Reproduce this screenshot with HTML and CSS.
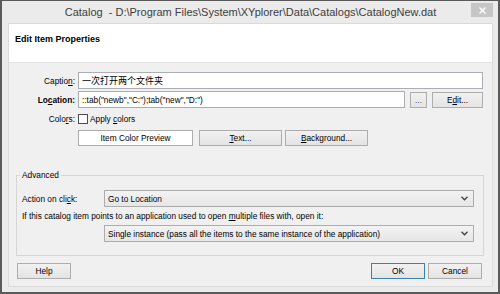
FILE: index.html
```html
<!DOCTYPE html>
<html>
<head>
  <title>Catalog - Edit Item Properties</title>
  <link rel="stylesheet" href="styles.css">
</head>
<body>
  <div class="window">
    <div class="titlebar">
      <span></span>
      <div class="title">Catalog  - D:\Program Files\System\XYplorer\Data\Catalogs\CatalogNew.dat</div>
      <div class="close">
        <svg width="7" height="7" viewBox="0 0 7 7"><path d="M0.5 0.5L6.5 6.5M6.5 0.5L0.5 6.5" stroke="#fff" stroke-width="1.4"/></svg>
      </div>
    </div>

    <div class="client">
      <div class="header">Edit Item Properties</div>

      <!-- item properties -->
      <div class="props">
        <label class="lbl">Captio<u>n</u>:</label>
        <input class="field cjk" type="text" value="一次打开两个文件夹">

        <label class="lbl strong">Lo<u>c</u>ation:</label>
        <div class="row">
          <input class="field grow" type="text" value='::tab("newb","C:");tab("new","D:")'>
          <button class="btn dots">...</button>
          <button class="btn edit">E<u>d</u>it...</button>
        </div>

        <label class="lbl">Colo<u>r</u>s:</label>
        <div class="row">
          <span class="check"></span>
          <span>Apply <u>c</u>olors</span>
        </div>

        <span></span>
        <div class="row">
          <div class="preview">Item Color Preview</div>
          <button class="btn wide first"><u>T</u>ext...</button>
          <button class="btn wide"><u>B</u>ackground...</button>
        </div>
      </div>

      <!-- advanced group -->
      <fieldset class="advanced">
        <legend>Advanced</legend>
        <div class="adv">
          <span>Action on cli<u>c</u>k:</span>
          <div class="combo">
            <span>Go to Location</span>
            <svg width="7" height="5" viewBox="0 0 7 5"><path d="M0.5 0.8L3.5 3.8L6.5 0.8" fill="none" stroke="#404040" stroke-width="1.3"/></svg>
          </div>
          <span class="sentence">If this catalog item points to an application used to open <u>m</u>ultiple files with, open it:</span>
          <span></span>
          <div class="combo">
            <span>Single instance (pass all the items to the same instance of the application)</span>
            <svg width="7" height="5" viewBox="0 0 7 5"><path d="M0.5 0.8L3.5 3.8L6.5 0.8" fill="none" stroke="#404040" stroke-width="1.3"/></svg>
          </div>
        </div>
      </fieldset>

      <div class="actions">
        <button class="btn dlg">Help</button>
        <button class="btn dlg ok">OK</button>
        <button class="btn dlg cancel">Cancel</button>
      </div>
    </div>
  </div>
</body>
</html>
```

FILE: styles.css
```css
body {
  margin: 0;
  font-family: "Liberation Sans", "Noto Sans CJK SC", sans-serif;
  font-size: 8.3px;
  color: #000;
  background: #fff;
}

.window {
  width: 500px;
  height: 294px;
  box-sizing: border-box;
  border: 2px solid #5a5a5a;
  border-top-width: 1px;
  background: #ebebeb;
  padding: 0 5px 5px 6px;
  display: flex;
  flex-direction: column;
}

.titlebar {
  height: 22px;
  flex: none;
  display: grid;
  grid-template-columns: 1fr auto 1fr;
  align-items: start;
}

.title {
  font-size: 11px;
  line-height: 23px;
  color: #3d3d3d;
  white-space: pre;
}

.close {
  justify-self: end;
  width: 22px;
  height: 14px;
  margin-top: 2px;
  background: #c6c6c6;
  display: flex;
  align-items: center;
  justify-content: center;
}

.client {
  flex: 1;
  background: #f0f0f0;
  border: 1px solid #dadada;
  display: flex;
  flex-direction: column;
}

.header {
  height: 39px;
  box-sizing: border-box;
  background: #fff;
  border-bottom: 1px solid #e3e3e3;
  font-weight: bold;
  font-size: 9px;
  padding: 10px 0 0 6px;
}

.props {
  display: grid;
  grid-template-columns: 66px 1fr;
  grid-auto-rows: 17px;
  column-gap: 3px;
  row-gap: 2px;
  align-items: center;
  padding: 9px 9px 0 0;
}

.lbl {
  text-align: right;
}

.strong {
  font-weight: bold;
}

.field {
  width: 100%;
  height: 17px;
  box-sizing: border-box;
  border: 1px solid #abadb3;
  background: #fff;
  padding: 0 3px;
  font: inherit;
  color: #000;
  outline: none;
}

.field.cjk {
  font-size: 9px;
}

.row {
  display: flex;
  align-items: center;
  height: 17px;
}

.grow {
  flex: 1;
  width: auto;
  min-width: 0;
}

.btn {
  height: 16px;
  box-sizing: border-box;
  border: 1px solid #adadad;
  background: linear-gradient(#f1f1f1, #e4e4e4);
  font: inherit;
  color: #000;
  padding: 0;
}

.dots {
  width: 17px;
  margin-left: 5px;
  color: #555;
}

.edit {
  width: 51px;
  margin-left: 5px;
}

.check {
  width: 10px;
  height: 10px;
  box-sizing: border-box;
  border: 1px solid #4d4d4d;
  background: #fff;
  margin-right: 2px;
}

.preview {
  width: 115px;
  height: 16px;
  box-sizing: border-box;
  border: 1px solid #adadad;
  background: #fff;
  display: flex;
  align-items: center;
  justify-content: center;
}

.wide {
  width: 83px;
  margin-left: 3px;
}

.wide.first {
  margin-left: 6px;
}

.advanced {
  margin: 24px 8px 0 7px;
  padding: 10px 9px 13px 5px;
  border: 1px solid #d6d6d6;
}

.advanced legend {
  padding: 0 2px;
  margin-left: -2px;
}

.adv {
  display: grid;
  grid-template-columns: 82px 1fr;
  align-items: center;
}

.sentence {
  grid-column: 1 / span 2;
  margin: 4px 0 4px;
}

.combo {
  height: 17px;
  box-sizing: border-box;
  border: 1px solid #acacac;
  background: linear-gradient(#f3f3f3, #e6e6e6);
  display: flex;
  align-items: center;
  justify-content: space-between;
  padding: 0 5px 0 3px;
}

.actions {
  display: flex;
  padding: 7px 10px 0 8px;
}

.dlg {
  width: 54px;
}

.ok {
  margin-left: auto;
  border-color: #3c7fb1;
}

.cancel {
  margin-left: 3px;
}
```
